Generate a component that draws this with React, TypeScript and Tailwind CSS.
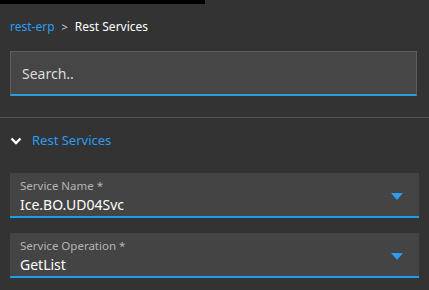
import React from "react";

function Field({ label, value }: { label: string; value: string }) {
  return (
    <div className="mx-[10px] h-[45px] bg-[#444444] border-b-2 border-[#1e9cf0] flex items-center pl-[10px] pr-[16px]">
      <div className="flex-1 flex flex-col self-start pt-[6px]">
        <span className="text-[11.5px] leading-[14px] text-[#b4b4b4]">{label}</span>
        <span className="text-[14px] leading-[18px] text-white mt-[3px]">{value}</span>
      </div>
      <svg width="12" height="7" viewBox="0 0 12 7" className="mt-[4px]">
        <polygon points="0,0 12,0 6,7" fill="#2b9cf2" />
      </svg>
    </div>
  );
}

export default function App() {
  return (
    <div
      className="w-[429px] h-[290px] bg-[#333333] overflow-hidden"
      style={{ fontFamily: '"Noto Sans", "Open Sans", sans-serif' }}
    >
      <div className="h-[4px] w-[205px] bg-black" />
      <div className="h-[47px] flex items-center pl-[10px] text-[12px] pb-[1px]">
        <span className="text-[#2a9df4]">rest-erp</span>
        <span className="text-[#cccccc] mx-[7px] text-[11px]">&gt;</span>
        <span className="text-white">Rest Services</span>
      </div>
      <div className="mx-[10px] mr-[12px] h-[45px] bg-[#464646] border border-[#5e5e5e] border-b-2 border-b-[#2b9cd8] flex items-center pl-[11px] text-[14px] text-[#dddddd]">
        Search..
      </div>
      <div className="h-[21px]" />
      <div className="h-[1px] bg-[#555555]" />
      <div className="h-[46px] flex items-center pl-[10px]">
        <svg width="12" height="8" viewBox="0 0 12 8" className="mr-[10px]">
          <polyline points="1.5,1.5 6,6 10.5,1.5" fill="none" stroke="white" strokeWidth="2.4" />
        </svg>
        <span className="text-[13px] text-[#2a9df4]">Rest Services</span>
      </div>
      <div className="h-[9px]" />
      <Field label="Service Name *" value="Ice.BO.UD04Svc" />
      <div className="h-[15px]" />
      <Field label="Service Operation *" value="GetList" />
    </div>
  );
}
